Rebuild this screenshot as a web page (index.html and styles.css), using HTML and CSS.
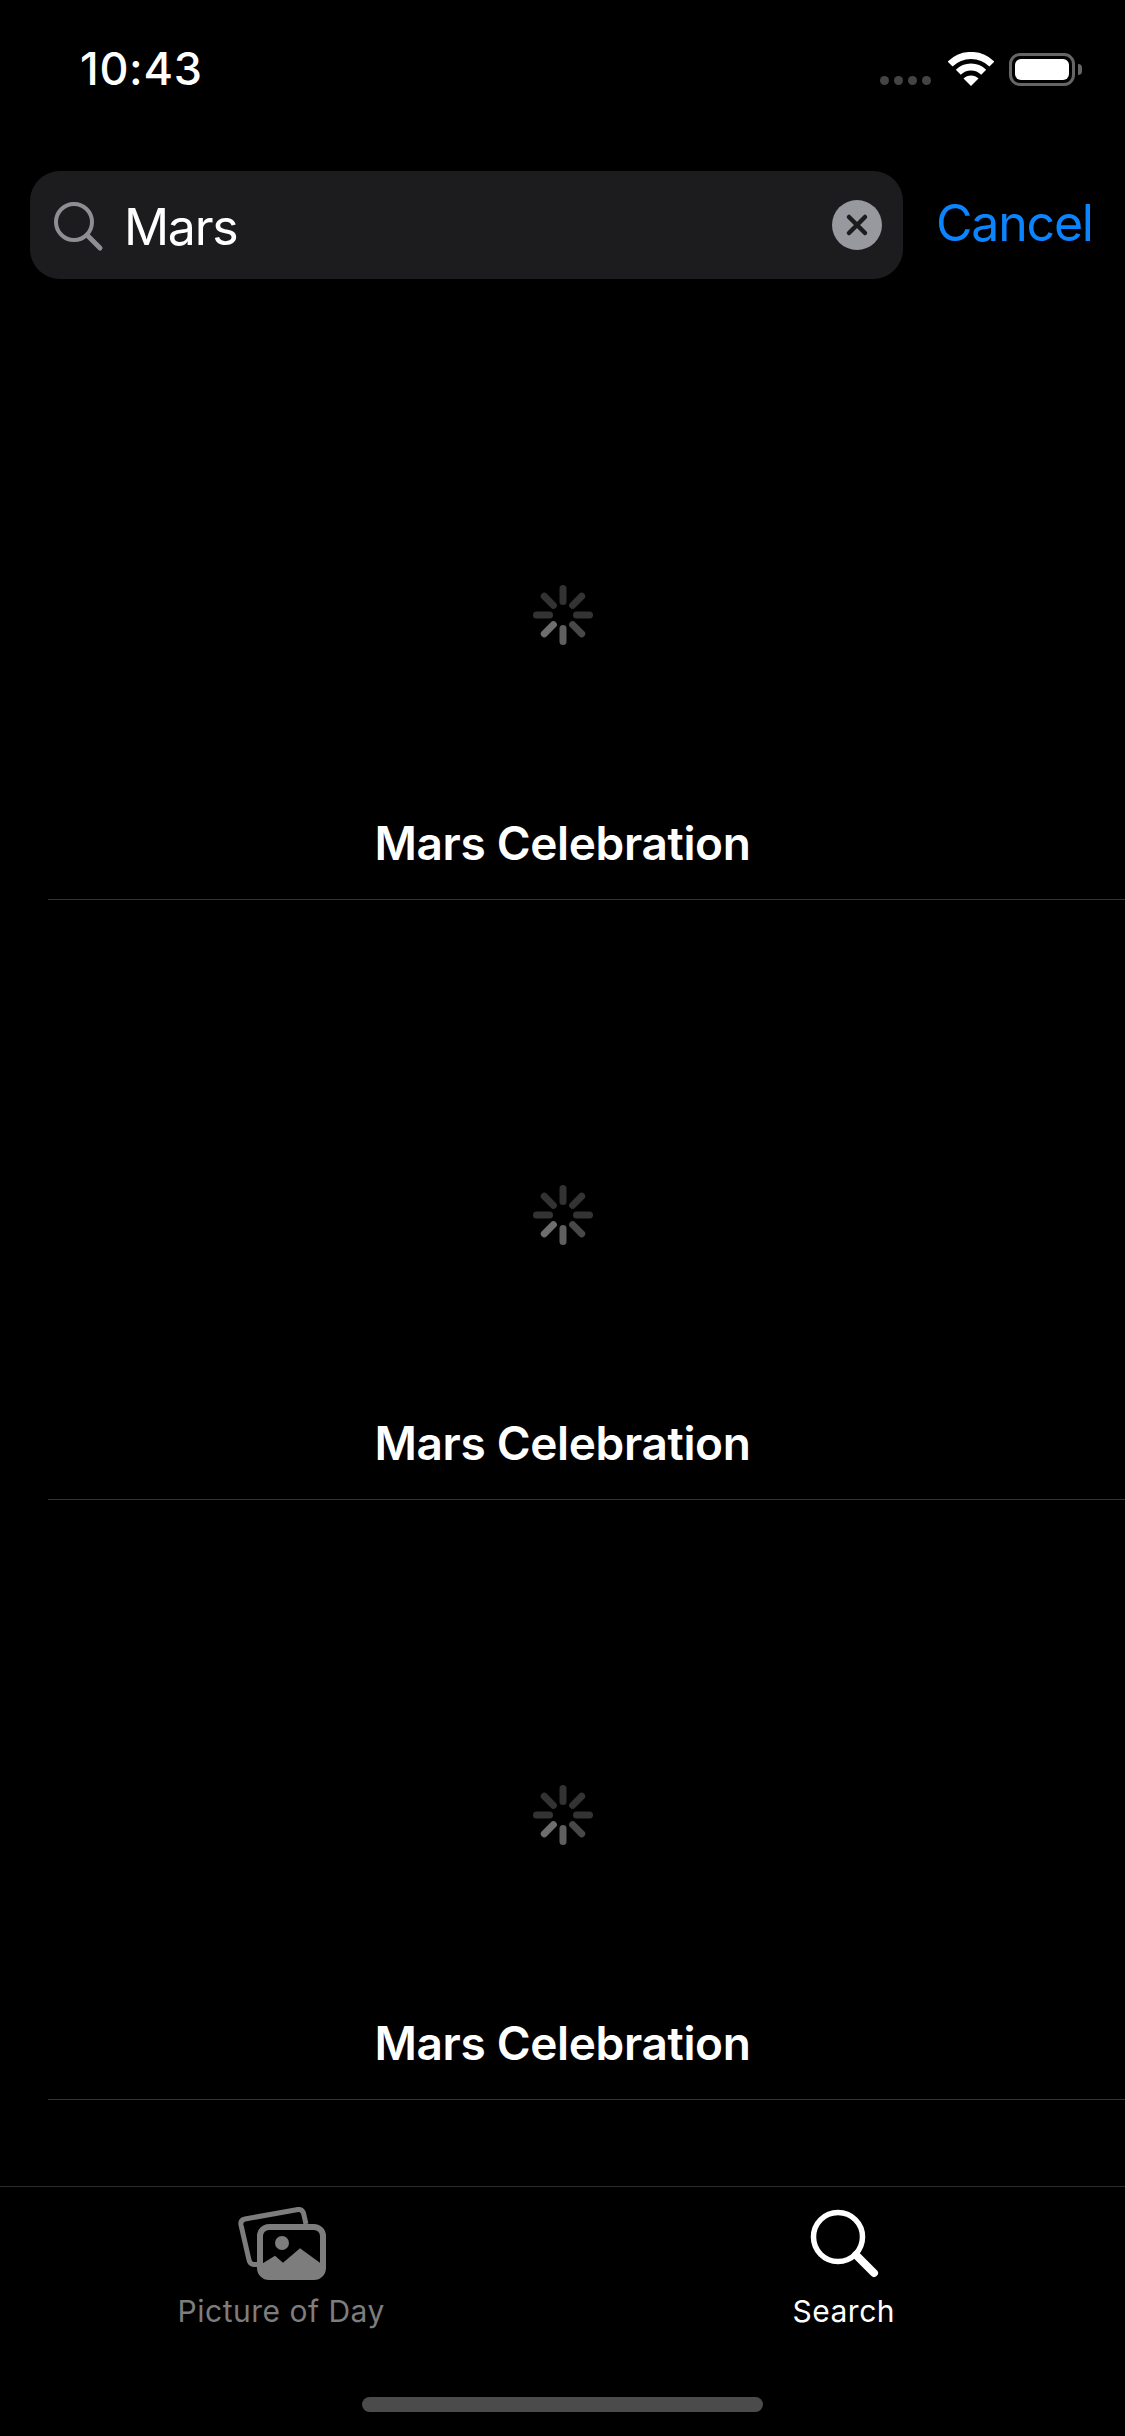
FILE: index.html
```html
<!DOCTYPE html>
<html lang="en">
<head>
    <meta charset="UTF-8">
    <title>Search</title>
    <link rel="stylesheet" href="styles.css">
</head>
<body>
    <svg class="defs" width="0" height="0">
        <symbol id="spinner" viewBox="0 0 60 60">
            <line class="spoke" x1="30" y1="3.5" x2="30" y2="16.5"/>
            <line class="spoke" x1="48.7" y1="11.3" x2="39.6" y2="20.4"/>
            <line class="spoke" x1="56.5" y1="30" x2="43.5" y2="30"/>
            <line class="spoke mid" x1="48.7" y1="48.7" x2="39.6" y2="39.6"/>
            <line class="spoke bright" x1="30" y1="56.5" x2="30" y2="43.5"/>
            <line class="spoke brightest" x1="11.3" y1="48.7" x2="20.4" y2="39.6"/>
            <line class="spoke" x1="3.5" y1="30" x2="16.5" y2="30"/>
            <line class="spoke" x1="11.3" y1="11.3" x2="20.4" y2="20.4"/>
        </symbol>
    </svg>

    <div class="screen">
        <div class="status-bar">
            <span class="time">10:43</span>
            <div class="status-icons">
                <div class="signal"><i></i><i></i><i></i><i></i></div>
                <svg class="wifi" width="46" height="34" viewBox="0 0 46 34">
                    <path d="M2.1 12.1A29.5 29.5 0 0 1 43.9 12.1" fill="none" stroke="#fff" stroke-width="7"/>
                    <path d="M10.3 20.3A18 18 0 0 1 35.7 20.3" fill="none" stroke="#fff" stroke-width="7"/>
                    <path d="M23 34L15.5 26.5A10.6 10.6 0 0 1 30.5 26.5Z" fill="#fff"/>
                </svg>
                <div class="battery"><div class="battery-fill"></div></div>
                <div class="battery-nub"></div>
            </div>
        </div>

        <div class="search-row">
            <div class="search-box">
                <svg class="search-icon" width="50" height="50" viewBox="0 0 50 50">
                    <circle cx="20" cy="20" r="18" fill="none" stroke="#8e8e93" stroke-width="4"/>
                    <line x1="33" y1="33" x2="46" y2="46" stroke="#8e8e93" stroke-width="5" stroke-linecap="round"/>
                </svg>
                <span class="search-text">Mars</span>
                <svg class="clear-icon" width="50" height="50" viewBox="0 0 50 50">
                    <circle cx="25" cy="25" r="25" fill="#98989f"/>
                    <path d="M17 17L33 33M33 17L17 33" stroke="#1c1c1e" stroke-width="4.5" stroke-linecap="round"/>
                </svg>
            </div>
            <span class="cancel">Cancel</span>
        </div>

        <div class="results">
            <div class="row">
                <svg class="spinner"><use href="#spinner"/></svg>
                <div class="row-title">Mars Celebration</div>
                <div class="row-line"></div>
            </div>
            <div class="row">
                <svg class="spinner"><use href="#spinner"/></svg>
                <div class="row-title">Mars Celebration</div>
                <div class="row-line"></div>
            </div>
            <div class="row">
                <svg class="spinner"><use href="#spinner"/></svg>
                <div class="row-title">Mars Celebration</div>
                <div class="row-line"></div>
            </div>
        </div>

        <div class="tab-bar">
            <div class="tab">
                <svg class="tab-icon photos" width="100" height="80" viewBox="0 0 100 80">
                    <path d="M27 64.5H24Q20 64.5 19 60L11 25Q10 20 15 19L68 9.5Q72 9 73.5 13L76 24" fill="none" stroke="#7d7d7d" stroke-width="5"/>
                    <rect x="30" y="27" width="63" height="50" rx="9" fill="none" stroke="#7d7d7d" stroke-width="6"/>
                    <circle cx="52" cy="43" r="7" fill="#7d7d7d"/>
                    <path d="M30 65L45 55.7L53 62.7L70 48.3L93 65V70Q93 77 85 77H38Q30 77 30 70Z" fill="#7d7d7d"/>
                </svg>
                <span class="tab-label">Picture of Day</span>
            </div>
            <div class="tab active">
                <svg class="tab-icon" width="100" height="80" viewBox="0 0 100 80">
                    <circle cx="44" cy="37" r="24.5" fill="none" stroke="#fff" stroke-width="5.5"/>
                    <line x1="62" y1="55" x2="80" y2="73" stroke="#fff" stroke-width="8" stroke-linecap="round"/>
                </svg>
                <span class="tab-label">Search</span>
            </div>
        </div>

        <div class="home-area">
            <div class="home-bar"></div>
        </div>
    </div>
</body>
</html>
```

FILE: styles.css
```css
body {
    margin: 0;
    background-color: #000;
    font-family: 'Inter', 'Roboto', sans-serif;
    color: #fff;
}

.defs {
    display: block;
    height: 0;
}

.screen {
    width: 1125px;
    height: 2436px;
    display: flex;
    flex-direction: column;
    overflow: hidden;
}

.status-bar {
    height: 171px;
    flex-shrink: 0;
    display: flex;
    justify-content: space-between;
    align-items: flex-start;
}

.time {
    margin: 41px 0 0 80px;
    font-size: 45px;
    line-height: 56px;
    font-weight: 550;
    letter-spacing: 0.7px;
}

.status-icons {
    display: flex;
    align-items: flex-end;
    margin: 52px 43px 0 0;
}

.signal {
    display: flex;
    gap: 5px;
    margin: 0 17px 1px 0;
}

.signal i {
    width: 9px;
    height: 9px;
    border-radius: 50%;
    background-color: #444;
}

.wifi {
    display: block;
    margin-right: 15px;
}

.battery {
    width: 66px;
    height: 33px;
    box-sizing: border-box;
    border: 3px solid #666;
    border-radius: 11px;
    padding: 3px;
}

.battery-fill {
    height: 100%;
    background-color: #fff;
    border-radius: 6px;
}

.battery-nub {
    width: 4px;
    height: 11px;
    margin: 0 0 11px 3px;
    background-color: #666;
    border-radius: 0 4px 4px 0;
}

.search-row {
    height: 108px;
    flex-shrink: 0;
    margin-bottom: 21px;
    padding-left: 30px;
    display: flex;
    align-items: center;
}

.search-box {
    width: 873px;
    height: 108px;
    box-sizing: border-box;
    padding: 0 21px 0 24px;
    background-color: #1c1c1e;
    border-radius: 30px;
    display: flex;
    align-items: center;
}

.search-icon {
    flex-shrink: 0;
    margin-top: 4px;
}

.search-text {
    flex: 1;
    margin: 3px 0 0 20px;
    font-size: 50px;
    line-height: 60px;
    letter-spacing: -1.3px;
}

.clear-icon {
    flex-shrink: 0;
}

.cancel {
    margin: 0 0 4px 33px;
    font-size: 50px;
    line-height: 60px;
    letter-spacing: -1.2px;
    color: #0a84ff;
}

.results {
    flex: 1;
    min-height: 0;
    overflow: hidden;
}

.row {
    height: 600px;
    display: flex;
    flex-direction: column;
    align-items: center;
}

.spinner {
    display: block;
    width: 60px;
    height: 60px;
    margin-top: 285px;
    flex-shrink: 0;
}

.spoke {
    stroke: #333;
    stroke-width: 7;
    stroke-linecap: round;
}

.spoke.mid {
    stroke: #484848;
}

.spoke.bright {
    stroke: #5f5f5f;
}

.spoke.brightest {
    stroke: #6e6e6e;
}

.row-title {
    margin-top: 168px;
    font-size: 46px;
    line-height: 60px;
    font-weight: 600;
    letter-spacing: -0.35px;
}

.row-line {
    align-self: stretch;
    height: 1px;
    margin: 26px 0 0 48px;
    background-color: #333;
}

.tab-bar {
    height: 146px;
    flex-shrink: 0;
    border-top: 1px solid #2c2c2c;
    display: flex;
}

.tab {
    flex: 1;
    display: flex;
    flex-direction: column;
    align-items: center;
    color: #7d7d7d;
}

.tab.active {
    color: #fff;
}

.tab-icon {
    display: block;
    margin-top: 13px;
}

.tab-icon.photos {
    margin-left: -3px;
}

.tab-label {
    margin-top: 13px;
    font-size: 30px;
    line-height: 36px;
    letter-spacing: 0.5px;
}

.home-area {
    height: 103px;
    flex-shrink: 0;
    display: flex;
    justify-content: center;
}

.home-bar {
    width: 401px;
    height: 15px;
    margin-top: 64px;
    background-color: #4b4b4b;
    border-radius: 8px;
}
```
